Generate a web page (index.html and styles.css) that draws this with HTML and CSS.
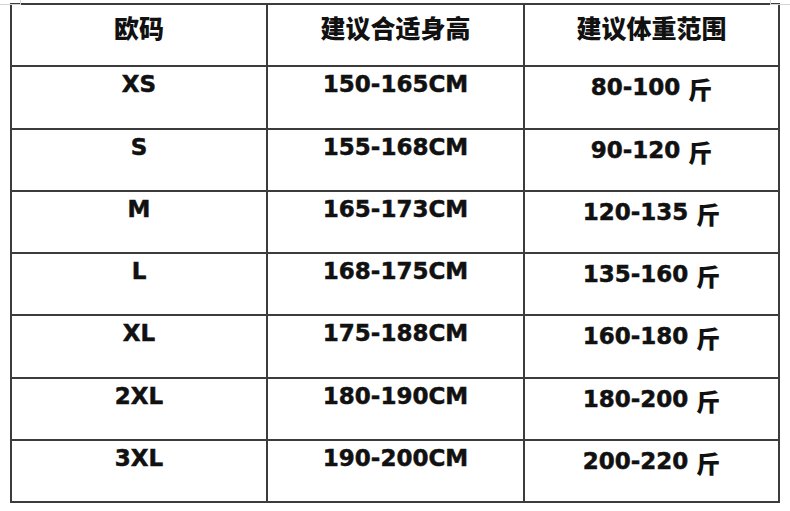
FILE: index.html
```html
<!DOCTYPE html>
<html lang="zh-CN">
<head>
<meta charset="utf-8">
<title>尺码表</title>
<link rel="stylesheet" href="styles.css">
</head>
<body>
<span class="grid-ghost ghost-left"></span>
<span class="grid-ghost ghost-right"></span>
<div class="size-table">
  <div class="cell head">欧码</div>
  <div class="cell head">建议合适身高</div>
  <div class="cell head">建议体重范围</div>

  <div class="cell size">XS</div>
  <div class="cell height">150-165CM</div>
  <div class="cell weight">80-100 <span class="jin">斤</span></div>

  <div class="cell size">S</div>
  <div class="cell height">155-168CM</div>
  <div class="cell weight">90-120 <span class="jin">斤</span></div>

  <div class="cell size">M</div>
  <div class="cell height">165-173CM</div>
  <div class="cell weight">120-135 <span class="jin">斤</span></div>

  <div class="cell size">L</div>
  <div class="cell height">168-175CM</div>
  <div class="cell weight">135-160 <span class="jin">斤</span></div>

  <div class="cell size">XL</div>
  <div class="cell height">175-188CM</div>
  <div class="cell weight">160-180 <span class="jin">斤</span></div>

  <div class="cell size">2XL</div>
  <div class="cell height">180-190CM</div>
  <div class="cell weight">180-200 <span class="jin">斤</span></div>

  <div class="cell size">3XL</div>
  <div class="cell height">190-200CM</div>
  <div class="cell weight">200-220 <span class="jin">斤</span></div>
</div>
</body>
</html>
```

FILE: styles.css
```css
html, body {
  margin: 0;
  padding: 0;
  background: #ffffff;
  width: 790px;
  height: 511px;
  overflow: hidden;
}

body {
  position: relative;
  padding-top: 3px;
  box-sizing: border-box;
  font-family: "DejaVu Sans", "Noto Sans CJK SC", sans-serif;
  font-weight: bold;
  color: #111111;
}

.size-table {
  margin-left: 10px;
  width: 770px;
  box-sizing: border-box;
  padding: 2px;
  background: #3c3c3c;
  display: grid;
  grid-template-columns: 254px 255px 253px;
  grid-template-rows: repeat(8, 60.25px);
  gap: 2px;
}

.cell {
  background: #ffffff;
  text-align: center;
  white-space: nowrap;
}

.head {
  font-family: "Noto Sans CJK SC", sans-serif;
  font-weight: 900;
  font-size: 25px;
  line-height: 25px;
  padding-top: 10px;
}

.size,
.height,
.weight {
  font-size: 23px;
  line-height: 23px;
  -webkit-text-stroke: 0.5px #111111;
}

.size,
.height {
  padding-top: 6px;
}

.weight {
  padding-top: 9px;
}

.jin {
  font-family: "Noto Sans CJK SC", sans-serif;
  font-weight: 900;
  font-size: 24px;
  -webkit-text-stroke: 0;
  vertical-align: -4px;
}

.grid-ghost {
  position: absolute;
  border-color: #d4d4d4;
  border-style: solid;
  box-sizing: border-box;
}

.ghost-left {
  left: 0;
  top: 0;
  width: 21px;
  height: 5px;
  border-width: 0 1px 1px 0;
}

.ghost-right {
  left: 770px;
  top: 0;
  width: 20px;
  height: 5px;
  border-width: 0 0 1px 1px;
}
```
